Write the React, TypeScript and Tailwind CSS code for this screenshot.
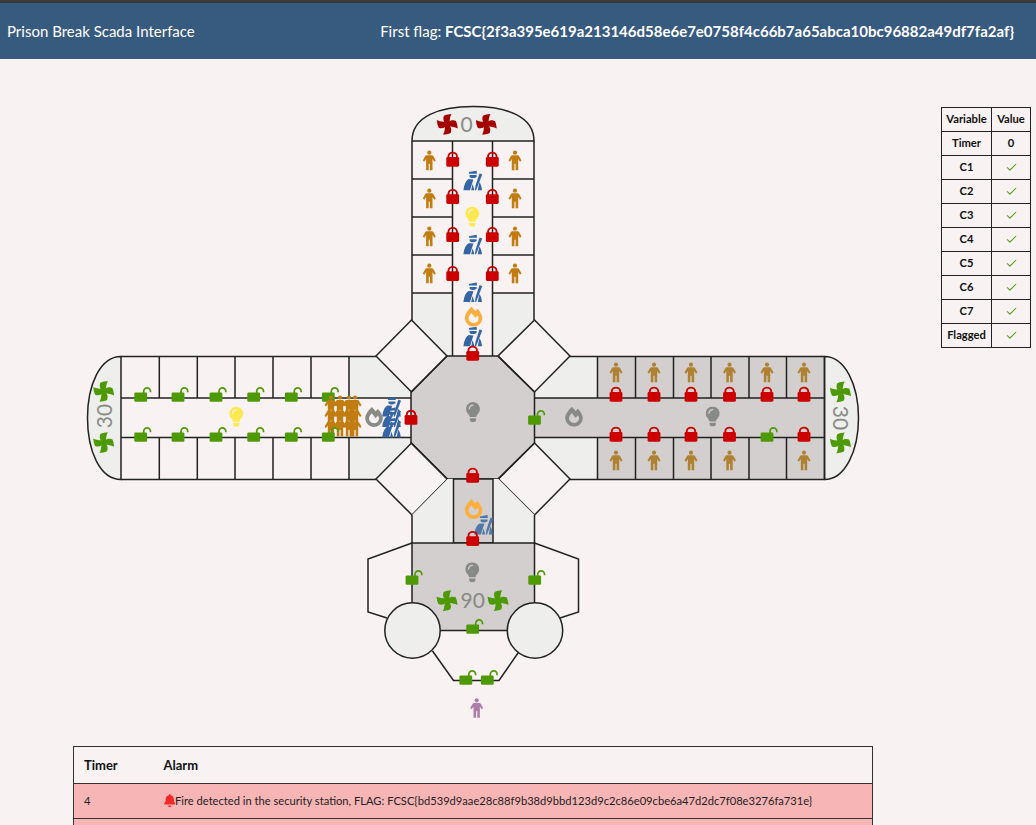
import { FaBell, FaFireAlt, FaLightbulb } from "react-icons/fa";
import { Check } from "lucide-react";

const WALL = "#222222";
const LIGHT = "#eeeeec";
const DARK = "#d3cfcf";
const GREEN = "#4e9a06";
const RED = "#cc0000";
const BROWN = "#c17d11";
const GREY = "#888a85";
const YELLOW = "#fce94f";
const BLUE = "#3465a4";

const Person = ({ x, y, color = BROWN }: { x: number; y: number; color?: string }) => (
  <g transform={`translate(${x - 6.5} ${y})`} fill={color}>
    <circle cx="6.5" cy="2" r="2.1" />
    <path d="M3.8 4.6H9.2Q10 4.6 10.5 5.4L13 9.8 11.5 11 9.7 8.4V19.5H7.1V13H5.9V19.5H3.3V8.4L1.5 11 0 9.8 2.5 5.4Q3 4.6 3.8 4.6Z" />
  </g>
);

// body is centred on x and ends at "bottom"
const Lock = ({ x, bottom }: { x: number; bottom: number }) => (
  <g>
    <path
      d={`M${x - 4.2} ${bottom - 8}V${bottom - 10.4}a4.2 3.7 0 0 1 8.4 0V${bottom - 8}`}
      fill="none"
      stroke={RED}
      strokeWidth="1.9"
    />
    <rect x={x - 6.4} y={bottom - 9.8} width="12.8" height="9.8" rx="1.4" fill={RED} />
  </g>
);

const OpenLock = ({ x, bottom }: { x: number; bottom: number }) => (
  <g>
    <path
      d={`M${x + 3} ${bottom - 7}V${bottom - 10.5}a3.4 3.4 0 0 1 6.8 0V${bottom - 9.5}`}
      fill="none"
      stroke={GREEN}
      strokeWidth="1.7"
    />
    <rect x={x - 6.4} y={bottom - 9.2} width="12.8" height="9.2" rx="1.2" fill={GREEN} />
  </g>
);

const Fan = ({ x, y, color = GREEN }: { x: number; y: number; color?: string }) => (
  <g transform={`translate(${x} ${y})`} fill={color}>
    <circle r="2.6" />
    {[0, 90, 180, 270].map((r) => (
      <path
        key={r}
        transform={`rotate(${r})`}
        d="M-2 -1C-4 -3 -4.5 -6 -3.4 -8.6 -1 -9.8 1.5 -10.2 4.2 -10.4 2.4 -7.6 2.6 -4 2 -1Z"
      />
    ))}
  </g>
);

const Guard = ({ x, y, color = BLUE }: { x: number; y: number; color?: string }) => (
  <g transform={`translate(${x - 9.5} ${y})`} fill={color}>
    <path d="M5.6 1.4 13.4 0 13.8 3H6Z" />
    <path d="M6.4 4.4H13.4V6.2Q11.6 7.4 9.6 7.4 7.6 7.4 6.4 6.2Z" />
    <path d="M5.4 8.4 10.2 8.8 6.8 19.5H0.2Q0.6 15 2.2 12 3.4 9.6 5.4 8.4Z" />
    <path d="M9.4 13.4 11.2 19.5H8Z" />
    <path d="M16.4 2.6 19 3.8 12.9 19.5H11.8L12.4 14.6Z" />
    <path d="M16.2 11.6Q18.2 14 18.8 19.5H14.6Z" />
  </g>
);

const Bulb = ({ x, y, color }: { x: number; y: number; color: string }) => (
  <FaLightbulb x={x - 10} y={y} size={20} color={color} />
);

const Flame = ({ x, y, color }: { x: number; y: number; color: string }) => (
  <FaFireAlt x={x - 10} y={y} size={20} color={color} />
);

const cols = [616, 654, 691, 729.5, 767, 804];
const leftCols = [140.7, 178, 216, 253.7, 291.3, 328.3];

const Diagram = () => (
  <svg width={790} height={640} viewBox="80 100 790 640" className="shrink-0">
    {/* north wing */}
    <path
      d="M412 141C412 116 440 106.5 473 106.5 506 106.5 534 116 534 141Z"
      fill={LIGHT}
      stroke={WALL}
      strokeWidth="1.5"
    />
    <path d="M412 293H452.5V356H447L412 320Z" fill={LIGHT} />
    <path d="M534 293H492.5V356H498L534 320Z" fill={LIGHT} />
    <g fill="none" stroke={WALL} strokeWidth="1.5">
      <path d="M412 141V320M534 141V320M452.5 141V356M492.5 141V356" />
      <path d="M412 179H452.5M412 217H452.5M412 255H452.5M412 293H452.5" />
      <path d="M492.5 179H534M492.5 217H534M492.5 255H534M492.5 293H534" />
    </g>

    {/* west wing */}
    <path
      d="M121 356.5C100 356.5 87.5 385 87.5 418 87.5 451 100 479.5 121 479.5Z"
      fill={LIGHT}
      stroke={WALL}
      strokeWidth="1.5"
    />
    <path d="M349 356.5H376L411 392V398H349Z" fill={LIGHT} />
    <path d="M349 479.5H376L411 443V437.5H349Z" fill={LIGHT} />
    <g fill="none" stroke={WALL} strokeWidth="1.5">
      <path d="M121 356.5H376M121 479.5H376M121 398H411M121 437.5H411" />
      <path d="M159.3 356.5V398M197.3 356.5V398M235 356.5V398M273 356.5V398M311 356.5V398M349 356.5V398" />
      <path d="M159.3 437.5V479.5M197.3 437.5V479.5M235 437.5V479.5M273 437.5V479.5M311 437.5V479.5M349 437.5V479.5" />
    </g>

    {/* east wing */}
    <path d="M570 356.5H597.5V398H534V392Z" fill={LIGHT} />
    <path d="M570 479.5H597.5V437.5H534V443Z" fill={LIGHT} />
    <rect x="597.5" y="356.5" width="227" height="123" fill={DARK} />
    <rect x="534" y="398" width="64" height="39.5" fill={DARK} />
    <path
      d="M824.5 356.5C845 356.5 858.5 385 858.5 418 858.5 451 845 479.5 824.5 479.5Z"
      fill={LIGHT}
      stroke={WALL}
      strokeWidth="1.5"
    />
    <g fill="none" stroke={WALL} strokeWidth="1.5">
      <path d="M570 356.5H824.5M570 479.5H824.5M534 398H824.5M534 437.5H824.5" />
      <path d="M597.5 356.5V398M635.5 356.5V398M673.5 356.5V398M711 356.5V398M749 356.5V398M786.5 356.5V398M824.5 356.5V479.5" />
      <path d="M597.5 437.5V479.5M635.5 437.5V479.5M673.5 437.5V479.5M711 437.5V479.5M749 437.5V479.5M786.5 437.5V479.5" />
    </g>

    {/* hub and diamonds */}
    <path
      d="M447 356H498L534.5 392V443L498 479H447L411 443V392Z"
      fill={DARK}
      stroke={WALL}
      strokeWidth="1.5"
    />
    <g fill="none" stroke={WALL} strokeWidth="1.5">
      <path d="M411.5 320 447 356 411.5 392 376 356Z" />
      <path d="M534.5 320 570 356 534.5 392 498 356Z" />
      <path d="M411.5 443 447.5 479 412 515 376 479Z" />
      <path d="M534.5 443 570 479 534.5 515 498.5 479Z" />
    </g>

    {/* south block */}
    <path d="M412 515 447.5 479H453.5V543H412Z" fill={LIGHT} />
    <path d="M534.5 515 498.5 479H493V543H534.5Z" fill={LIGHT} />
    <rect x="453.5" y="479" width="39.5" height="64" fill={DARK} stroke={WALL} strokeWidth="1.5" />
    <path d="M412 515V543M534.5 515V543" stroke={WALL} strokeWidth="1.5" />
    <rect x="412" y="543" width="122.5" height="87.5" fill={DARK} stroke={WALL} strokeWidth="1.5" />
    <path
      d="M412 543 368 559V612L387 618M534.5 543 578.5 559V612L560 618M432.5 651 453.5 680.5H499L518 653"
      fill="none"
      stroke={WALL}
      strokeWidth="1.5"
    />
    <circle cx="412.5" cy="630.5" r="27.7" fill={LIGHT} stroke={WALL} strokeWidth="1.5" />
    <circle cx="535" cy="630.5" r="27.7" fill={LIGHT} stroke={WALL} strokeWidth="1.5" />

    {/* numbers */}
    <g fill={GREY} fontFamily="Lato, sans-serif" fontSize="21" textAnchor="middle">
      <text x="466.5" y="132">0</text>
      <text x="472.8" y="607.5">90</text>
      <text transform="translate(111.5 416) rotate(-90)">30</text>
      <text transform="translate(833 418) rotate(90)">30</text>
    </g>

    {/* fans */}
    <Fan x={447.3} y={124.3} color="#a40000" />
    <Fan x={486.3} y={124.3} color="#a40000" />
    <Fan x={103.7} y={391.3} />
    <Fan x={103.7} y={442.6} />
    <Fan x={840.5} y={392} />
    <Fan x={840.5} y={443} />
    <Fan x={447} y={600.7} />
    <Fan x={498} y={600.7} />

    {/* north wing people and locks */}
    {[150.7, 188.7, 226.7, 263.7].map((y) => (
      <g key={y}>
        <Person x={429.3} y={y} />
        <Person x={515} y={y} />
      </g>
    ))}
    {[166.7, 204, 242, 281].map((b) => (
      <g key={b}>
        <Lock x={452.7} bottom={b} />
        <Lock x={492.3} bottom={b} />
      </g>
    ))}
    <Guard x={472.7} y={170.7} />
    <Bulb x={472.3} y={206.7} color={YELLOW} />
    <Guard x={472.7} y={234.8} />
    <Guard x={472.7} y={282.5} />
    <Flame x={473.6} y={306.7} color="#fcaf3e" />
    <Guard x={472.7} y={326.7} />
    <Lock x={472.7} bottom={360.7} />

    {/* west wing */}
    {leftCols.map((x) => (
      <g key={x}>
        <OpenLock x={x} bottom={401.7} />
      </g>
    ))}
    <Bulb x={236.3} y={406.7} color={YELLOW} />
    {[331, 340, 349, 355].map((x) => (
      <g key={x}>
        <Person x={x} y={395.5} />
        <Person x={x} y={406} />
        <Person x={x} y={417} />
      </g>
    ))}
    {leftCols.map((x) => (
      <OpenLock key={x} x={x} bottom={441.7} />
    ))}
    <Flame x={374} y={407} color={GREY} />
    {[397, 407.5, 418].map((y) => (
      <Guard key={y} x={391.5} y={y} />
    ))}
    <Lock x={411} bottom={424.8} />

    {/* hub */}
    <Bulb x={473} y={402} color={GREY} />
    <Lock x={472.7} bottom={482.7} />

    {/* east wing */}
    <OpenLock x={534.5} bottom={424.7} />
    <Flame x={574} y={406.7} color={GREY} />
    <Bulb x={712.7} y={406.5} color={GREY} />
    {cols.map((x) => (
      <g key={x}>
        <Person x={x} y={362.7} color="#ae8232" />
        {x !== 767 && <Person x={x} y={450.7} color="#ae8232" />}
        <Lock x={x} bottom={401.7} />
        {x === 767 ? <OpenLock x={x} bottom={441.7} /> : <Lock x={x} bottom={441.7} />}
      </g>
    ))}

    {/* south */}
    <Flame x={473.6} y={499} color="#fcaf3e" />
    <Guard x={483.6} y={515} color="#4f77a8" />
    <Lock x={472.7} bottom={546} />
    <Bulb x={472.3} y={562.3} color={GREY} />
    <OpenLock x={412} bottom={584.7} />
    <OpenLock x={534.7} bottom={584.7} />
    <OpenLock x={472.7} bottom={633.7} />
    <OpenLock x={465.8} bottom={684.7} />
    <OpenLock x={487.3} bottom={684.7} />
    <Person x={476.7} y={698.3} color="#ad7fa8" />
  </svg>
);

const VARIABLES = ["C1", "C2", "C3", "C4", "C5", "C6", "C7", "Flagged"];

const VariableTable = () => (
  <table className="ml-[71px] mt-[7px] h-fit w-[90px] shrink-0 border-collapse text-center text-[11.2px] font-bold text-[#111]">
    <thead>
      <tr className="h-6">
        <th className="border border-[#222] px-0 font-bold">Variable</th>
        <th className="w-[39px] border border-[#222] px-0 font-bold">Value</th>
      </tr>
    </thead>
    <tbody>
      <tr className="h-6">
        <td className="border border-[#222]">Timer</td>
        <td className="border border-[#222]">0</td>
      </tr>
      {VARIABLES.map((name) => (
        <tr key={name} className="h-6">
          <td className="border border-[#222]">{name}</td>
          <td className="border border-[#222]">
            <Check size={13} strokeWidth={1.9} color={GREEN} className="mx-auto" />
          </td>
        </tr>
      ))}
    </tbody>
  </table>
);

const AlarmTable = () => (
  <table className="ml-[73px] w-[800px] border-collapse border border-[#333] text-left text-[#222]">
    <thead>
      <tr className="h-[37px] border-b border-[#333] text-[13px] text-[#111]">
        <th className="w-[90px] pl-[10px] pt-[2px] font-bold">Timer</th>
        <th className="pt-[2px] font-bold">Alarm</th>
      </tr>
    </thead>
    <tbody className="bg-[#f8b5b5] text-[11.16px]">
      <tr className="h-[35px] border-b border-[#333]">
        <td className="pl-[10px]">4</td>
        <td>
          <span className="flex items-center">
            <FaBell color="#ef2929" className="h-[13px] w-[11.5px] shrink-0" />
            Fire detected in the security station, FLAG: FCSC&#123;bd539d9aae28c88f9b38d9bbd123d9c2c86e09cbe6a47d2dc7f08e3276fa731e&#125;
          </span>
        </td>
      </tr>
      <tr className="h-[35px]">
        <td />
        <td />
      </tr>
    </tbody>
  </table>
);

export default function App() {
  return (
    <div className="h-[825px] overflow-hidden bg-[#f8f2f2] font-['Lato',sans-serif]">
      <header className="flex h-[59px] items-center justify-between border-t-[3px] border-[#3a3a3a] bg-[#375a7f] pl-[7px] pr-[22px] text-[15px] text-white">
        <span>Prison Break Scada Interface</span>
        <span>
          First flag:{" "}
          <b className="font-bold">FCSC&#123;2f3a395e619a213146d58e6e7e0758f4c66b7a65abca10bc96882a49df7fa2af&#125;</b>
        </span>
      </header>
      <main className="flex h-[687px] pl-[80px] pt-[41px]">
        <Diagram />
        <VariableTable />
      </main>
      <AlarmTable />
    </div>
  );
}
